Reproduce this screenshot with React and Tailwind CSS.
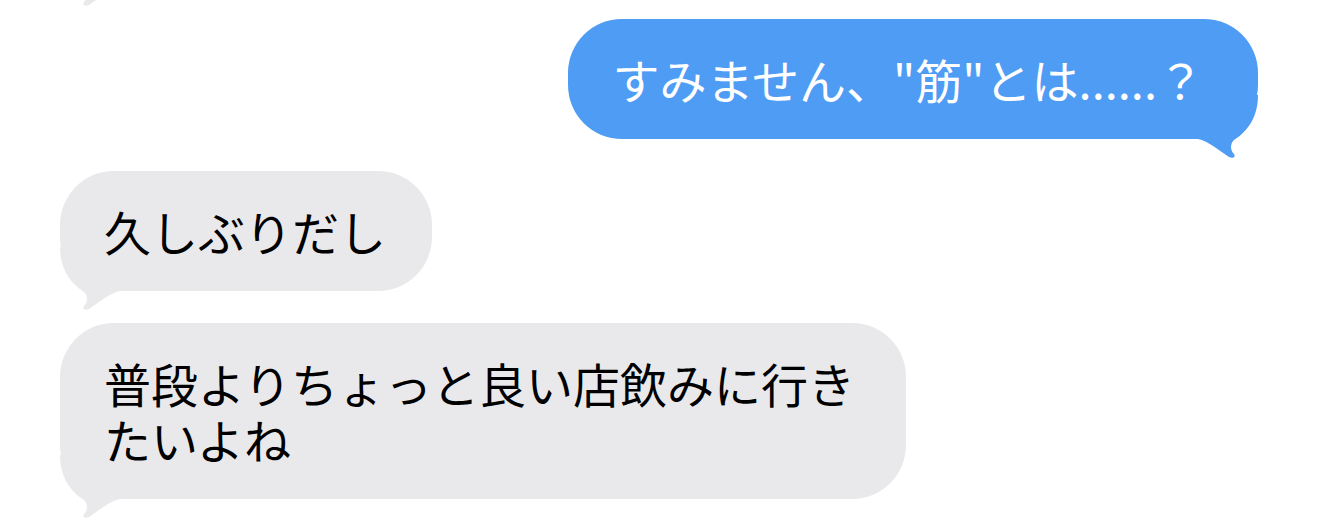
import React from 'react'

// Chat thread: one sent (blue) bubble, two received (gray) bubbles.
// The tail of an earlier received bubble peeks in at the top edge.

function Tail({ color, side }) {
  const flip = side === 'left' ? '-scale-x-100 left-0' : 'right-0'
  return (
    <svg
      width="60"
      height="65"
      viewBox="0 0 60 65"
      className={`absolute bottom-[-21px] ${flip}`}
    >
      <path
        d="M60 0 C60 22 50 36 36 45 C32 49 32 55 36 59 C38 62 35 64 31 62 C22 56 10 46 0 44 L0 0 Z"
        fill={color}
      />
    </svg>
  )
}

function Bubble({ sent, children, className = '' }) {
  const color = sent ? '#4f9cf5' : '#e9e9eb'
  return (
    <div
      className={`relative rounded-[54px] py-[32px] pl-[44px] text-[47px] leading-[56px] ${
        sent ? 'bg-[#4f9cf5] pr-[54px] text-white' : 'bg-[#e9e9eb] pr-[46px] text-black'
      } ${className}`}
    >
      <span className="relative z-10">{children}</span>
      <Tail color={color} side={sent ? 'right' : 'left'} />
    </div>
  )
}

export default function App() {
  return (
    <div
      className="h-[526px] w-[1320px] overflow-hidden bg-white"
      style={{ fontFamily: '"Noto Sans CJK JP", "Noto Sans", sans-serif' }}
    >
      <div className="flex flex-col items-start gap-[32px]">
        {/* earlier message, scrolled off the top */}
        <Bubble className="ml-[60px] mt-[-133px] h-[120px] w-[400px]">{''}</Bubble>

        <Bubble sent className="mr-[62px] self-end">
          すみません、"筋"とは......？
        </Bubble>

        <Bubble className="ml-[60px]">久しぶりだし</Bubble>

        <Bubble className="ml-[60px] max-w-[846px]">
          普段よりちょっと良い店飲みに行きたいよね
        </Bubble>
      </div>
    </div>
  )
}
